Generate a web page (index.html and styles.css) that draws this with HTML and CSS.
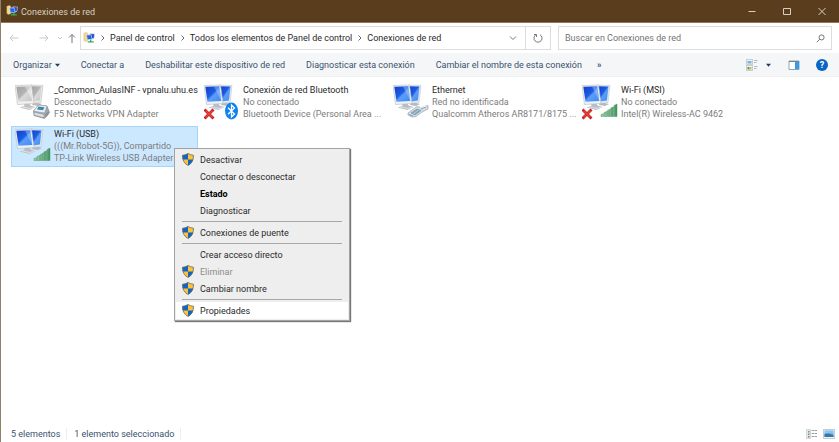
FILE: index.html
```html
<!DOCTYPE html>
<html lang="es">
<head>
<meta charset="utf-8">
<title>Conexiones de red</title>
<link rel="stylesheet" href="styles.css">
</head>
<body>
<svg class="sprite" aria-hidden="true">
  <defs>
    <linearGradient id="blue" x1="0" y1="0" x2="1" y2="1">
      <stop offset="0" stop-color="#1440c4"/><stop offset=".45" stop-color="#1c5ce6"/><stop offset=".55" stop-color="#5c9cf6"/><stop offset="1" stop-color="#3f8cf4"/>
    </linearGradient>
    <linearGradient id="gray" x1="0" y1="0" x2="1" y2="1">
      <stop offset="0" stop-color="#a2a2a2"/><stop offset=".45" stop-color="#b4b4b4"/><stop offset=".55" stop-color="#dadada"/><stop offset="1" stop-color="#c4c4c4"/>
    </linearGradient>
    <linearGradient id="green" x1="0" y1="0" x2="1" y2="0">
      <stop offset="0" stop-color="#a5d3ae"/><stop offset="1" stop-color="#3f9460"/>
    </linearGradient>
    <symbol id="pcs" viewBox="0 0 36 36">
      <path d="M18 18l4-1 1 2 4 1-4 2-6-1z" fill="#b4babf"/>
      <path d="M15 1l13 .5-2 17-8 1z" fill="#e4eaef" stroke="#b4bcc4" stroke-width=".5"/>
      <path d="M16 2.200l10.500.4-1.600 14-7 .8z" fill="url(#blue)"/>
      <path d="M9 19l5-.5 1.500 3 5 1.500-6 3-10-2.500 5-1.500z" fill="#b9bfc5"/>
      <path d="M7 23l8 1.500 4-1.500" stroke="#e6eaed" stroke-width=".8"/>
      <path d="M0 1.500l16.500-.5 2.500 18.500-16.500 1z" fill="#eef3f7" stroke="#b4bcc4" stroke-width=".6"/>
      <path d="M1.300 2.800L15.300 2.300 17.300 17 3.500 17.800z" fill="url(#blue)"/>
      <path d="M15.300 2.300l2 14.700L10 2.500z" fill="#a9cbfb" opacity=".45"/>
    </symbol>
    <symbol id="pcs-off" viewBox="0 0 36 36">
      <path d="M18 18l4-1 1 2 4 1-4 2-6-1z" fill="#bcbcbc"/>
      <path d="M15 1l13 .5-2 17-8 1z" fill="#e8e8e8" stroke="#bbb" stroke-width=".5"/>
      <path d="M16 2.200l10.500.4-1.600 14-7 .8z" fill="url(#gray)"/>
      <path d="M9 19l5-.5 1.500 3 5 1.500-6 3-10-2.500 5-1.500z" fill="#c2c2c2"/>
      <path d="M7 23l8 1.500 4-1.500" stroke="#eaeaea" stroke-width=".8"/>
      <path d="M0 1.500l16.500-.5 2.500 18.500-16.500 1z" fill="#f3f3f3" stroke="#bbb" stroke-width=".6"/>
      <path d="M1.300 2.800L15.300 2.300 17.300 17 3.500 17.800z" fill="url(#gray)"/>
      <path d="M15.300 2.300l2 14.700L10 2.500z" fill="#fff" opacity=".35"/>
    </symbol>
    <symbol id="bars" viewBox="0 0 36 36">
      <path d="M19 30.500l2.400-.8V32.500H19zM22 28.500l2.800-1v5H22zM25.400 26.500l2.800-1.200v7.200h-2.800zM28.800 24l2.800-1.200v9.700h-2.800zM32.200 21.500L35 20v12.500h-2.800z" fill="url(#green)" stroke="#4c9465" stroke-width=".5"/>
    </symbol>
    <symbol id="cross" viewBox="0 0 36 36">
      <path d="M1.500 26.500l7 7M8.500 26.500l-7 7" stroke="#c41c1e" stroke-width="2.800" stroke-linecap="square"/>
      <path d="M1.500 26.500l7 7M8.500 26.500l-7 7" stroke="#e8403c" stroke-width="1.600"/>
    </symbol>
    <symbol id="bluetooth" viewBox="0 0 36 36">
      <ellipse cx="27.500" cy="27" rx="6.500" ry="8.500" fill="#0f82f0"/>
      <path d="M24 23.800l6.500 6.200-3 3V21l3 3-6.500 6.200" stroke="#fff" stroke-width="1.300"/>
    </symbol>
    <symbol id="plug" viewBox="0 0 36 36">
      <path d="M15 29l9-6.500 4 1 7-2v3.500l-6 3-6 4.500-4 .5-4-2z" fill="#d3e0e8" stroke="#8796a1" stroke-width=".6"/>
      <path d="M18 29l6-4 4 1.500-6 4.500z" fill="#a9c8da" stroke="#668293" stroke-width=".6"/>
      <path d="M28 25l5-2M20 29l4-3M22 30l4-3M16 30.500l4 1.500" stroke="#6d8796" stroke-width=".7"/>
      <path d="M27 24l6-2" stroke="#fff" stroke-width=".8"/>
    </symbol>
    <symbol id="modem" viewBox="0 0 36 36">
      <path d="M18.500 27l5-6 8.500 1 2.500 6.500-5 6-10.500-3z" fill="#9fa8af" stroke="#707b84" stroke-width=".6"/>
      <path d="M18.500 27l5-6 8.500 1-2.500 7z" fill="#eef1f3" stroke="#89939b" stroke-width=".5"/>
      <path d="M23.500 22.500l6 .7-1.500 3-6-.8z" fill="#3d87ac"/>
      <path d="M19.500 28.800l9 2v2.500l-9-2.500z" fill="#dde1e4"/>
      <path d="M30.500 31l3-3M30.500 33l3-3" stroke="#59636b" stroke-width=".6"/>
    </symbol>
    <symbol id="net" viewBox="0 0 14 14">
      <path d="M1 1.500L4 .5l1.500 1v8.500L3 11l-2-1z" fill="#f3d98a" stroke="#d0b05c" stroke-width=".5"/>
      <path d="M8 2l5.500.3-.8 5.200-3.700.5z" fill="#1f49cf" stroke="#c7d4e6" stroke-width=".7"/>
      <path d="M4 3.500l5.500-.2 1.200 5.200-5.500.5z" fill="#2a60ea" stroke="#dbe5f2" stroke-width=".7"/>
      <path d="M5.500 11.500h7M9 9v2" stroke="#37ad58" stroke-width="1.600"/>
    </symbol>
    <symbol id="shield" viewBox="0 0 12 13">
      <path d="M6 .5Q8.500 2 11.500 2.300 11.700 9.500 6 12.500.3 9.500.5 2.300 3.500 2 6 .5z" fill="#ffc233"/>
      <path d="M6 .5v6H.8Q.4 4.500.5 2.300 3.500 2 6 .5zM6 6.500h5.200Q10 10.500 6 12.500z" fill="#1265c5"/>
      <path d="M6 .5Q8.500 2 11.500 2.300 11.700 9.500 6 12.500.3 9.500.5 2.300 3.500 2 6 .5z" fill="none" stroke="#5f6871" stroke-width=".8"/>
    </symbol>
  </defs>
</svg>
<div class="window">
  <header class="titlebar">
    <svg class="net-icon"><use href="#net"/></svg>
    <h1 class="title">Conexiones de red</h1>
    <button class="caption" aria-label="Minimizar"><svg viewBox="0 0 10 10"><path d="M1.500 5.500h7"/></svg></button>
    <button class="caption" aria-label="Maximizar"><svg viewBox="0 0 10 10"><path d="M1.500 2.500h7v6h-7z"/></svg></button>
    <button class="caption" aria-label="Cerrar"><svg viewBox="0 0 10 10"><path d="M1.500 2l7 7M8.500 2l-7 7"/></svg></button>
  </header>

  <div class="navrow">
    <div class="arrows">
      <button class="arrow faint" aria-label="Atrás"><svg viewBox="0 0 10 10"><path d="M9.500 5H1M4 2L1 5l3 3"/></svg></button>
      <button class="arrow faint" aria-label="Adelante"><svg viewBox="0 0 10 10"><path d="M.5 5H9M6 2l3 3-3 3"/></svg></button>
      <button class="arrow small faint" aria-label="Recientes"><svg viewBox="0 0 10 10"><path d="M3 4l2 2 2-2"/></svg></button>
      <button class="arrow up" aria-label="Subir"><svg viewBox="0 0 10 10"><path d="M5 10V1.500M2 4.500l3-3 3 3"/></svg></button>
    </div>
    <nav class="address" aria-label="Ruta">
      <svg class="net-icon"><use href="#net"/></svg>
      <svg class="chevron" viewBox="0 0 6 8"><path d="M1.500 1.500L4 4 1.500 6.500"/></svg>
      <a href="#">Panel de control</a>
      <svg class="chevron" viewBox="0 0 6 8"><path d="M1.500 1.500L4 4 1.500 6.500"/></svg>
      <a href="#">Todos los elementos de Panel de control</a>
      <svg class="chevron" viewBox="0 0 6 8"><path d="M1.500 1.500L4 4 1.500 6.500"/></svg>
      <a href="#">Conexiones de red</a>
      <button class="history" aria-label="Historial"><svg viewBox="0 0 10 10"><path d="M2 3.500l3 3 3-3"/></svg></button>
      <button class="refresh" aria-label="Actualizar"><svg viewBox="0 0 10 10"><path d="M7 1.700A4 4 0 1 1 2.700 1.900M3.500 4V1.500H1"/></svg></button>
    </nav>
    <label class="search">
      <input type="text" placeholder="Buscar en Conexiones de red" aria-label="Buscar en Conexiones de red">
      <svg viewBox="0 0 10 10"><circle cx="6.200" cy="3.800" r="2.800"/><path d="M4.200 5.800L.8 9.200"/></svg>
    </label>
  </div>

  <div class="toolbar">
    <button>Organizar <svg class="caret" viewBox="0 0 6 4"><path d="M0 .5h6L3 4z"/></svg></button>
    <button>Conectar a</button>
    <button>Deshabilitar este dispositivo de red</button>
    <button>Diagnosticar esta conexión</button>
    <button>Cambiar el nombre de esta conexión</button>
    <button class="more" aria-label="Más">»</button>
    <div class="views">
      <button aria-label="Cambiar la vista"><svg class="view-icon" viewBox="0 0 12 12"><path d="M.5.5h6v5h-6zM.5 6.500h6v5h-6z" fill="#edf3f6" stroke="#a7b3bb" stroke-width=".6"/><path d="M1.500 2h4v2.500h-4z" fill="#7fb4d8"/><path d="M1.500 8h2v2.500h-2z" fill="#42a55b"/><path d="M3.500 8h2v2.500h-2z" fill="#e0b04e"/><path d="M8 1.500h3.500M8 3.500h2.500M8 7.500h3.500M8 9.500h2.500" stroke="#a3abb1" stroke-width=".8"/></svg></button>
      <button aria-label="Más opciones"><svg class="caret" viewBox="0 0 6 4"><path d="M0 .5h6L3 4z"/></svg></button>
      <button class="pane" aria-label="Panel de vista previa"><svg class="view-icon" viewBox="0 0 12 12"><path d="M1 2h10v8.500H1z" fill="#fff" stroke="#78919f" stroke-width=".8"/><path d="M1 2.500h10" stroke="#6b8797"/><path d="M7 3h4v7H7z" fill="#369be8"/></svg></button>
      <button class="help" aria-label="Ayuda">?</button>
    </div>
  </div>

  <main class="content">
    <ul class="items">
      <li class="item"><svg><use href="#pcs-off"/><use href="#modem"/></svg>
        <div class="label"><b>_Common_AulasINF - vpnalu.uhu.es</b><span>Desconectado</span><span>F5 Networks VPN Adapter</span></div></li>
      <li class="item"><svg><use href="#pcs"/><use href="#cross"/><use href="#bluetooth"/></svg>
        <div class="label"><b>Conexión de red Bluetooth</b><span>No conectado</span><span>Bluetooth Device (Personal Area ...</span></div></li>
      <li class="item"><svg><use href="#pcs"/><use href="#plug"/></svg>
        <div class="label"><b>Ethernet</b><span>Red no identificada</span><span>Qualcomm Atheros AR8171/8175 ...</span></div></li>
      <li class="item"><svg><use href="#pcs"/><use href="#cross"/><use href="#bars"/></svg>
        <div class="label"><b>Wi-Fi (MSI)</b><span>No conectado</span><span>Intel(R) Wireless-AC 9462</span></div></li>
      <li class="item selected"><svg><use href="#pcs"/><use href="#bars"/></svg>
        <div class="label"><b>Wi-Fi (USB)</b><span>(((Mr.Robot-5G)), Compartido</span><span>TP-Link Wireless USB Adapter</span></div></li>
    </ul>
  </main>

  <footer class="status">
    <span>5 elementos</span>
    <span>1 elemento seleccionado</span>
    <div class="modes">
      <button aria-label="Detalles"><svg viewBox="0 0 12 10"><path d="M.5.500h4v9h-4z" fill="#e7e9eb" stroke="#b5babd" stroke-width=".5"/><path d="M2 2h1.500v1.500H2z" fill="#5598c0"/><path d="M2 4.500h1.500V6H2z" fill="#55a468"/><path d="M2 7h1.500v1.500H2z" fill="#c16f56"/><path d="M5.500 1.500h6M5.500 4.500h6M5.500 7.500h6" stroke="#9a9ea1" stroke-dasharray="2.500 .5"/></svg></button>
      <button aria-label="Iconos grandes"><svg viewBox="0 0 12 10"><path d="M.5.500h11v9H.5z" fill="#f0f2f3" stroke="#a8adb1" stroke-width=".6"/><path d="M1.500 1.500h9v6.500h-9z" fill="#6db4f0"/><path d="M1.500 5l4-.5 5 1.500v2h-9z" fill="#3a78a2"/><path d="M1.500 3h9" stroke="#b9dffa" stroke-width=".8"/></svg></button>
    </div>
  </footer>
</div>

<div class="menu" role="menu">
  <button role="menuitem"><svg><use href="#shield"/></svg>Desactivar</button>
  <button role="menuitem">Conectar o desconectar</button>
  <button role="menuitem" class="default">Estado</button>
  <button role="menuitem">Diagnosticar</button>
  <hr>
  <button role="menuitem"><svg><use href="#shield"/></svg>Conexiones de puente</button>
  <hr>
  <button role="menuitem">Crear acceso directo</button>
  <button role="menuitem" disabled><svg><use href="#shield"/></svg>Eliminar</button>
  <button role="menuitem"><svg><use href="#shield"/></svg>Cambiar nombre</button>
  <hr>
  <button role="menuitem" class="hover"><svg><use href="#shield"/></svg>Propiedades</button>
</div>
</body>
</html>
```
FILE: styles.css
```css
* { box-sizing: border-box; }

body {
  margin: 0;
  font: 9px/12px Roboto, "Noto Sans", sans-serif;
  color: #2a2a2a;
  background: #fff;
}

button {
  display: flex;
  align-items: center;
  padding: 0;
  border: 0;
  background: none;
  color: inherit;
  font: inherit;
  white-space: nowrap;
}

a { color: inherit; text-decoration: none; }
svg { flex: none; fill: none; }
.sprite { position: absolute; width: 0; height: 0; }

.window {
  display: flex;
  flex-direction: column;
  min-height: 100vh;
  border-left: 1px solid #93806b;
}

.titlebar {
  display: flex;
  align-items: center;
  height: 23px;
  padding-left: 5px;
  background: #593d1c;
  border-bottom: 1px solid #8f7760;
  color: #d8d0c6;
}
.net-icon { width: 12px; height: 12px; }
.title { flex: 1; margin: 0 0 0 3px; padding-top: 2px; font-size: 9px; font-weight: 400; }
.caption { justify-content: center; width: 35px; height: 22px; }
.caption svg { width: 10px; height: 10px; stroke: #d8d0c6; stroke-width: 1; }

.navrow { display: flex; align-items: center; height: 30px; padding-right: 7px; }
.arrows { display: flex; align-items: center; width: 79px; padding-left: 8px; }
.arrow { justify-content: center; width: 23px; height: 20px; }
.arrow:first-child { justify-content: flex-start; }
.arrow.small { width: 10px; }
.arrow.up { width: 14px; }
.arrow svg { width: 10px; height: 10px; stroke: #777; stroke-width: 1; }
.arrow.faint svg { stroke: #c9c9c9; }

.address {
  display: flex;
  align-items: center;
  flex: 1;
  height: 24px;
  padding-left: 2px;
  border: 1px solid #dcdcdc;
  white-space: nowrap;
}
.chevron { width: 6px; height: 8px; margin: 0 4px 0 5px; stroke: #666; }
.history { justify-content: center; width: 25px; height: 22px; margin-left: auto; border-right: 1px solid #dcdcdc; }
.refresh { justify-content: center; width: 24px; height: 22px; }
.history svg, .refresh svg { width: 10px; height: 10px; stroke: #777; stroke-width: 1; }

.search {
  display: flex;
  align-items: center;
  flex: 0 1 274px;
  height: 24px;
  margin-left: 7px;
  padding: 0 6px;
  border: 1px solid #dcdcdc;
}
.search input { flex: 1; min-width: 0; padding: 0; border: 0; outline: 0; background: none; font: inherit; }
.search input::placeholder { color: #737373; opacity: 1; }
.search svg { width: 9px; height: 9px; stroke: #666; }

.toolbar {
  display: flex;
  align-items: center;
  gap: 21px;
  height: 24px;
  padding: 0 11px 0 12px;
  background: #f5f6f7;
  border-bottom: 1px solid #eeeff0;
  color: #38536f;
}
.caret { width: 5px; height: 4px; margin-left: 3px; fill: #1f3d63; }
.more { margin-left: -6px; font-weight: 700; }
.views { display: flex; align-items: center; gap: 5px; margin-left: auto; }
.view-icon { width: 12px; height: 12px; }
.pane { margin-left: 12px; }
.help {
  justify-content: center;
  width: 12px;
  height: 12px;
  margin-left: 11px;
  border-radius: 50%;
  background: #0866c2;
  color: #fff;
  font-weight: 700;
}

.content { flex: 1; padding: 5px 0 0 10px; }
.items {
  display: grid;
  grid-template-columns: repeat(auto-fill, 187px);
  gap: 3px 2px;
  margin: 0;
  padding: 0;
  list-style: none;
}
.item { display: flex; gap: 3px; height: 41px; padding: 1px 3px; border: 1px solid transparent; }
.item.selected { background: #cce8ff; border-color: #a5d5fa; }
.item svg { width: 36px; height: 36px; }
.label { display: flex; flex-direction: column; white-space: nowrap; color: #7c7c7c; }
.label b { color: #2a2a2a; font-weight: 400; }

.status { display: flex; align-items: center; height: 17px; padding: 0 4px 0 10px; color: #38536f; }
.status span { padding-right: 6px; margin-right: 7px; border-right: 1px solid #eee; }
.modes { display: flex; gap: 5px; margin-left: auto; }
.modes svg { width: 12px; height: 10px; }

.menu {
  position: absolute;
  left: 174px;
  top: 148px;
  width: 176px;
  padding: 2px 1px 1px;
  background: #eee;
  border: 1px solid #a3a3a3;
  box-shadow: 1px 1px 1px #777;
}
.menu button { position: relative; width: 100%; height: 17px; padding-left: 24px; }
.menu svg { position: absolute; left: 6px; top: 2px; width: 12px; height: 13px; }
.menu hr { height: 1px; margin: 2px 6px; border: 0; background: #a8a8a8; }
.menu .default { color: #000; font-weight: 700; }
.menu button:disabled { color: #8d8d8d; }
.menu .hover { background: #fff; }
```
